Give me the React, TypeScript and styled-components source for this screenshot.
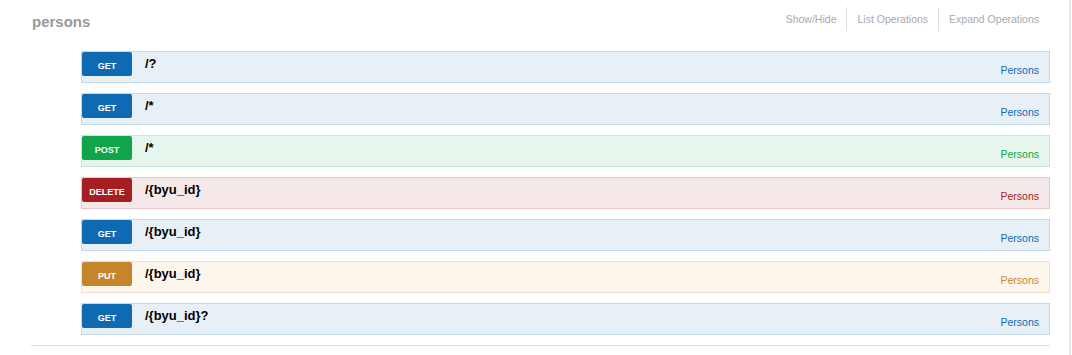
import styled, { createGlobalStyle } from 'styled-components';

const GlobalStyle = createGlobalStyle`
  html, body {
    margin: 0;
    padding: 0;
    background: #fff;
    font-family: "Liberation Sans", Arial, sans-serif;
  }
`;

type Method = 'get' | 'post' | 'put' | 'delete';

const palette: Record<Method, { badge: string; bg: string; border: string }> = {
  get: { badge: '#0f6ab4', bg: '#e7f0f7', border: '#c3d9ec' },
  post: { badge: '#10a54a', bg: '#e7f6ec', border: '#c3e8d1' },
  delete: { badge: '#a41e22', bg: '#f5e8e8', border: '#e8c6c7' },
  put: { badge: '#c5862b', bg: '#fcf6ed', border: '#f0e0ca' },
};

const Page = styled.div`
  width: 1069px;
  min-height: 100vh;
  border-right: 2px solid #e6e6e6;
`;

const Resource = styled.div`
  margin-left: 31px;
  width: 1019px;
  border-bottom: 1px solid #ddd;
`;

const Header = styled.div`
  display: flex;
  justify-content: space-between;
  align-items: flex-start;
  height: 41px;
  margin-bottom: 10px;
`;

const Title = styled.h2`
  margin: 0;
  padding: 12px 0 0 1px;
  font-size: 15px;
  line-height: 20px;
  font-weight: bold;
  color: #999;
`;

const Options = styled.ul`
  display: flex;
  list-style: none;
  margin: 7px 0 0;
  padding: 0 1px 0 0;
`;

const Option = styled.li<{ $first?: boolean }>`
  height: 24px;
  padding: 0 10px;
  border-left: ${({ $first }) => ($first ? 'none' : '1px solid #ddd')};
  font-size: 10.5px;
  line-height: 24px;
  color: #aaa;
`;

const Operations = styled.ul`
  list-style: none;
  margin: 0;
  padding: 0 0 10px 50px;
  display: flex;
  flex-direction: column;
  gap: 10px;
`;

const Row = styled.li<{ $method: Method }>`
  display: flex;
  align-items: flex-start;
  height: 32px;
  box-sizing: border-box;
  background: ${({ $method }) => palette[$method].bg};
  border: 1px solid ${({ $method }) => palette[$method].border};
`;

const Badge = styled.span<{ $method: Method }>`
  width: 50px;
  height: 24px;
  box-sizing: border-box;
  padding-top: 4px;
  border-radius: 2px;
  background: ${({ $method }) => palette[$method].badge};
  color: #fff;
  font-size: 9px;
  font-weight: bold;
  line-height: 20px;
  text-align: center;
  text-transform: uppercase;
`;

const Path = styled.span`
  flex: 1;
  padding-left: 13px;
  font-size: 13px;
  font-weight: bold;
  line-height: 24px;
  color: #000;
`;

const Tag = styled.span<{ $method: Method }>`
  align-self: flex-end;
  padding: 0 10px 6px 0;
  font-size: 10.5px;
  line-height: 12px;
  color: ${({ $method }) => palette[$method].badge};
`;

const operations: { method: Method; path: string }[] = [
  { method: 'get', path: '/?' },
  { method: 'get', path: '/*' },
  { method: 'post', path: '/*' },
  { method: 'delete', path: '/{byu_id}' },
  { method: 'get', path: '/{byu_id}' },
  { method: 'put', path: '/{byu_id}' },
  { method: 'get', path: '/{byu_id}?' },
];

const App = () => (
  <Page>
    <GlobalStyle />
    <Resource>
      <Header>
        <Title>persons</Title>
        <Options>
          <Option $first>Show/Hide</Option>
          <Option>List Operations</Option>
          <Option>Expand Operations</Option>
        </Options>
      </Header>
      <Operations>
        {operations.map((op, i) => (
          <Row key={i} $method={op.method}>
            <Badge $method={op.method}>{op.method}</Badge>
            <Path>{op.path}</Path>
            <Tag $method={op.method}>Persons</Tag>
          </Row>
        ))}
      </Operations>
    </Resource>
  </Page>
);

export default App;
